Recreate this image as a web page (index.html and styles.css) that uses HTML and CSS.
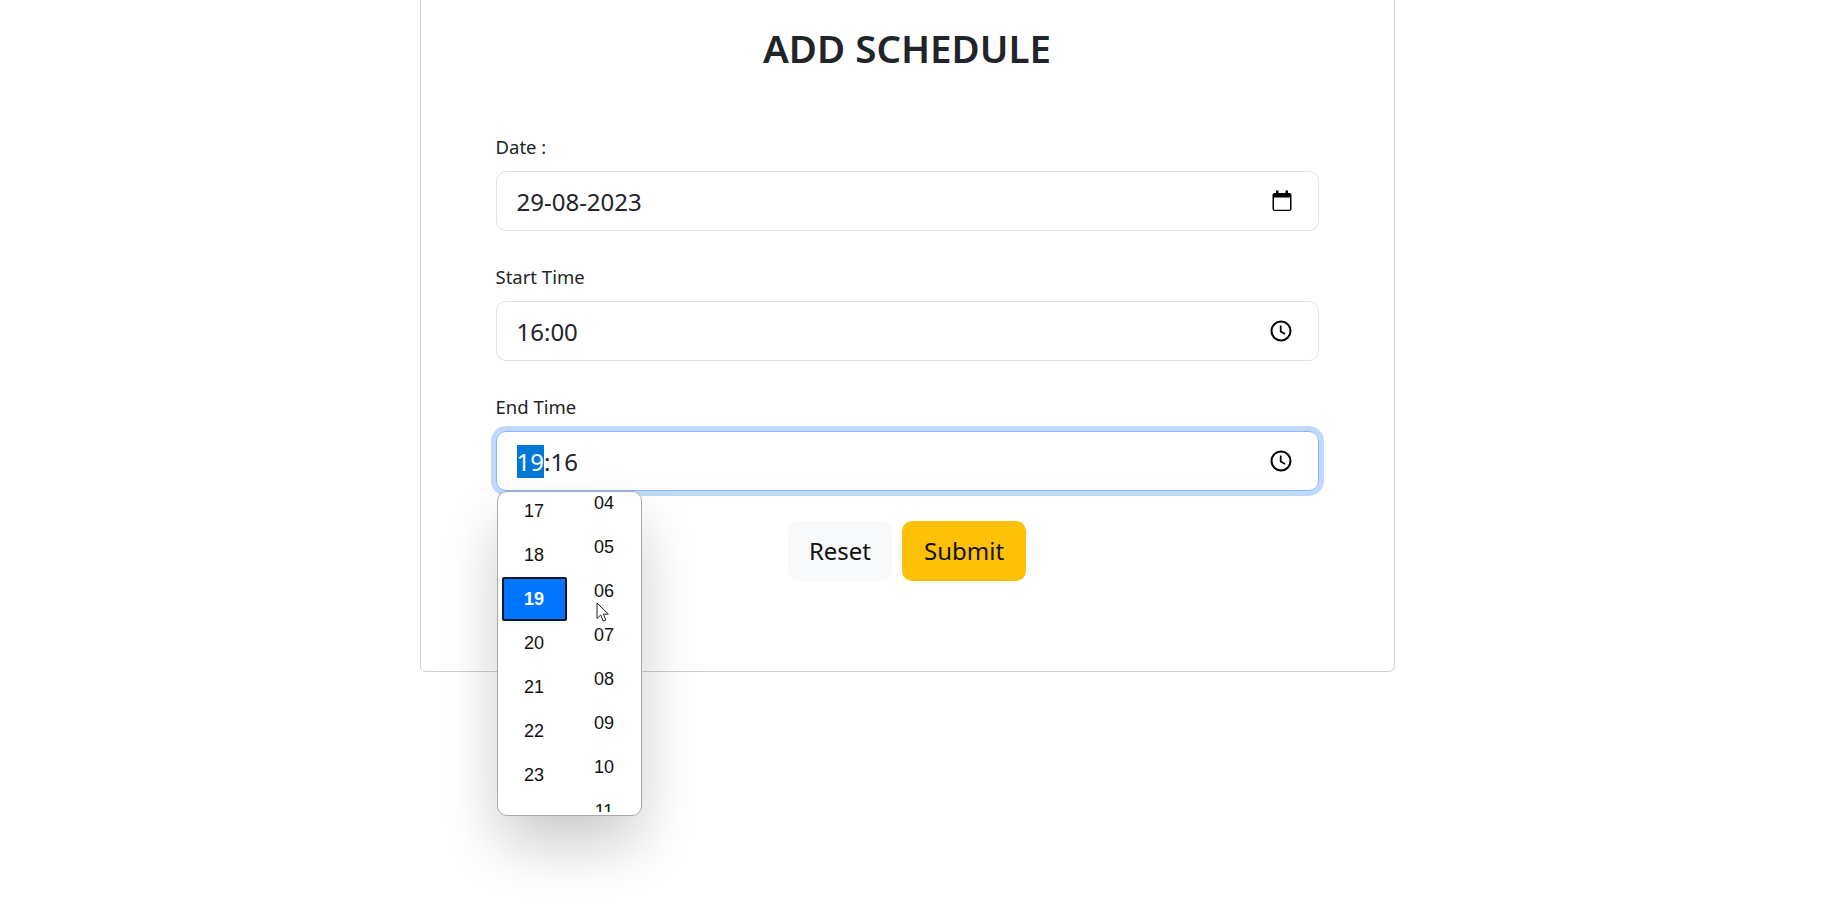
FILE: index.html
```html
<!DOCTYPE html>
<html lang="en">

<head>
    <meta charset="UTF-8">
    <meta name="viewport" content="width=device-width, initial-scale=1.0">
    <title>Add Schedule</title>
    <link rel="stylesheet" href="styles.css">
</head>

<body>

    <div class="card">
        <h2 class="title">ADD SCHEDULE</h2>

        <div class="field">
            <div class="label">Date :</div>
            <div class="input">
                <span>29-08-2023</span>
                <svg class="icon-date" width="20" height="22" viewBox="0 0 20 22">
                    <path d="M4 0.5h2.5v2.5h7v-2.5h2.500v2.500h1.500a2 2 0 0 1 2 2v14a2 2 0 0 1-2 2h-15a2 2 0 0 1-2-2v-14a2 2 0 0 1 2-2h1.500zM2 7.500v11.700a.6 .6 0 0 0 .6 .6h14.800a.6 .6 0 0 0 .6-.6v-11.700z" fill="#000" />
                </svg>
            </div>
        </div>

        <div class="field">
            <div class="label">Start Time</div>
            <div class="input">
                <span>16:00</span>
                <svg class="icon-time" width="22" height="22" viewBox="0 0 22 22">
                    <circle cx="11" cy="11" r="9.500" fill="none" stroke="#000" stroke-width="2" />
                    <path d="M10.700 5.500v6l4.300 2.500" fill="none" stroke="#000" stroke-width="1.700" />
                </svg>
            </div>
        </div>

        <div class="field">
            <div class="label">End Time</div>
            <div class="input focused">
                <span><span class="selected">19</span>:16</span>
                <svg class="icon-time" width="22" height="22" viewBox="0 0 22 22">
                    <circle cx="11" cy="11" r="9.500" fill="none" stroke="#000" stroke-width="2" />
                    <path d="M10.700 5.500v6l4.300 2.500" fill="none" stroke="#000" stroke-width="1.700" />
                </svg>

                <div class="picker">
                    <div class="col col-hours">
                        <div class="cell">17</div>
                        <div class="cell">18</div>
                        <div class="cell active">19</div>
                        <div class="cell">20</div>
                        <div class="cell">21</div>
                        <div class="cell">22</div>
                        <div class="cell">23</div>
                    </div>
                    <div class="col col-mins">
                        <div class="cell">04</div>
                        <div class="cell">05</div>
                        <div class="cell">06</div>
                        <div class="cell">07</div>
                        <div class="cell">08</div>
                        <div class="cell">09</div>
                        <div class="cell">10</div>
                        <div class="cell">11</div>
                    </div>
                    <svg class="cursor" width="14" height="21" viewBox="0 0 14 21">
                        <path d="M1 1v15.500l3.700-3.400 2.600 6 2.600-1.100-2.600-5.900h5z" fill="#fff" stroke="#222" stroke-width="1" />
                    </svg>
                </div>
            </div>
        </div>

        <div class="buttons">
            <div class="btn btn-reset">Reset</div>
            <div class="btn btn-submit">Submit</div>
        </div>
    </div>

</body>

</html>
```

FILE: styles.css
```css
html,
body {
    height: 915px;
    overflow: hidden;
}

body {
    margin: 0;
    padding-right: 14px;
    background-color: #fff;
    color: #212529;
    font-family: "Noto Sans", "Open Sans", sans-serif;
}

.card {
    box-sizing: border-box;
    width: 975px;
    height: 692px;
    margin: -20px auto 0;
    padding: 0 75px;
    border: 1px solid #cfcfcf;
    border-radius: 6px;
}

.title {
    margin: 0;
    padding: 41px 0 59px;
    font-size: 38.500px;
    font-weight: 600;
    line-height: 52px;
    text-align: center;
}

.field {
    margin-bottom: 32px;
}

.label {
    margin-bottom: 11px;
    font-size: 18.500px;
    line-height: 27px;
}

.input {
    position: relative;
    display: flex;
    align-items: center;
    justify-content: space-between;
    box-sizing: border-box;
    height: 60px;
    padding: 0 26px 0 20px;
    border: 1px solid #dee2e6;
    border-radius: 10px;
    font-size: 24px;
}

.focused {
    border-color: #86b7fe;
    box-shadow: 0 0 0 5px #c2d9fe;
}

.selected {
    display: inline-block;
    background-color: #0078d7;
    color: #fff;
}

.picker {
    position: absolute;
    top: 59px;
    left: 0;
    display: flex;
    box-sizing: border-box;
    width: 145px;
    height: 325px;
    overflow: hidden;
    border: 1px solid #aaa;
    border-radius: 10px;
    background-color: #fff;
    box-shadow: 0 30px 60px -4px rgba(0, 0, 0, 0.22);
    color: #111;
    font-family: "Liberation Sans", Arial, sans-serif;
    font-size: 18px;
    z-index: 2;
}

.col {
    flex: none;
    width: 65px;
    overflow: hidden;
}

.col-hours {
    height: 326px;
    margin: -3px 0 0 4px;
}

.col-mins {
    height: 331px;
    margin: -11px 0 0 5px;
}

.cell {
    box-sizing: border-box;
    height: 44px;
    line-height: 44px;
    text-align: center;
}

.active {
    border: 2px solid #101828;
    border-radius: 2px;
    background-color: #0075ff;
    color: #fff;
    font-weight: 700;
    line-height: 40px;
}

.cursor {
    position: absolute;
    top: 110px;
    left: 98px;
}

.buttons {
    display: flex;
    justify-content: center;
    gap: 10px;
    margin-top: -2px;
}

.btn {
    height: 60px;
    padding: 0 21px;
    border-radius: 10px;
    color: #111;
    font-size: 24px;
    line-height: 60px;
}

.btn-reset {
    background-color: #f8f9fb;
}

.btn-submit {
    padding: 0 22px;
    background-color: #ffc107;
}
```
